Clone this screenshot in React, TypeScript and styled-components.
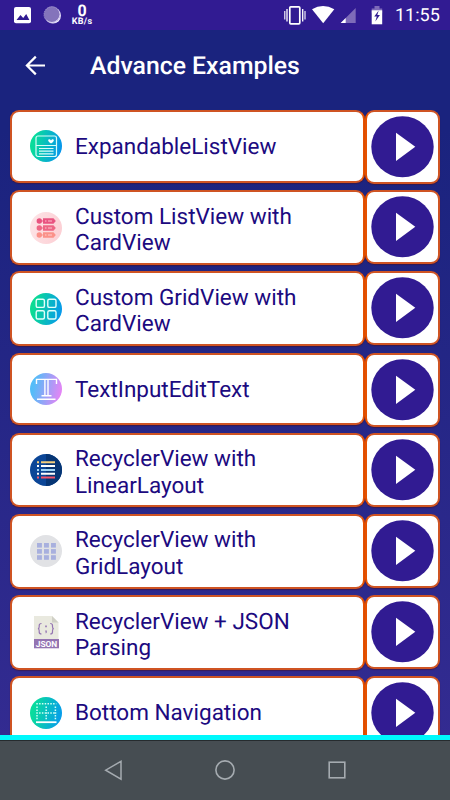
import React from 'react';
import styled, { createGlobalStyle } from 'styled-components';

const Global = createGlobalStyle`
  * { box-sizing: border-box; }
  body {
    margin: 0;
    overflow: hidden;
    font-family: Roboto, 'Liberation Sans', sans-serif;
    text-rendering: geometricPrecision;
  }
`;

const Screen = styled.div`
  width: 450px;
  height: 800px;
  display: flex;
  flex-direction: column;
  overflow: hidden;
  background: linear-gradient(#1a237e 0, #1a237e 130px, #332b91 740px);
`;

const StatusBar = styled.header`
  flex: none;
  height: 30px;
  display: flex;
  align-items: center;
  justify-content: space-between;
  background: #311b92;
  color: #fff;
`;

const StatusSide = styled.div`
  display: flex;
  align-items: center;
  height: 30px;
`;

const Speed = styled.div`
  width: 24px;
  display: flex;
  flex-direction: column;
  align-items: center;
  font-weight: 700;
`;

const SpeedValue = styled.span`
  font-size: 16px;
  line-height: 13px;
  font-weight: 700;
`;

const SpeedUnit = styled.span`
  font-size: 9px;
  line-height: 10px;
  letter-spacing: 0.3px;
`;

const Clock = styled.time`
  width: 55px;
  font-size: 18px;
  line-height: 30px;
  padding-top: 1px;
`;

const AppBar = styled.div`
  flex: none;
  height: 71px;
  display: flex;
  align-items: center;
  padding: 0 0 0 23px;
`;

const BackButton = styled.button`
  width: 67px;
  height: 24px;
  padding: 0;
  border: 0;
  background: none;
  display: flex;
`;

const Title = styled.h1`
  margin: 0;
  padding-top: 3px;
  color: #fff;
  font-size: 24.8px;
  line-height: 30px;
  font-weight: 500;
  white-space: nowrap;
`;

const List = styled.main`
  flex: none;
  height: 634px;
  padding: 9px 10px 0;
  overflow: hidden;
`;

const Row = styled.div<{ $double: boolean }>`
  display: flex;
  align-items: flex-start;
  height: ${(p) => (p.$double ? 81.15 : 80.3)}px;
`;

const Card = styled.div`
  background: #fff;
  border: 2px solid #cf5423;
  border-radius: 9px;
  box-shadow: 0 1px 1px rgba(70, 15, 40, 0.55);
`;

const LabelCard = styled(Card)<{ $double: boolean }>`
  width: 355px;
  height: ${(p) => (p.$double ? 74.5 : 72.5)}px;
  padding-left: 18px;
  display: flex;
  align-items: center;
  border-right-color: #e65100;
`;

const PlayCard = styled(Card)`
  width: 75px;
  height: 74px;
  display: flex;
  align-items: center;
  justify-content: center;
  border-left-color: #e65100;
`;

const IconBox = styled.span`
  width: 32px;
  height: 32px;
  margin-right: 13px;
  display: flex;
  flex: none;
`;

const Label = styled.span<{ $double: boolean }>`
  padding-top: ${(p) => (p.$double ? 5 : 2)}px;
  color: #1c0a80;
  font-size: 22.5px;
  line-height: 26.3px;
  white-space: pre-line;
`;

const Accent = styled.div`
  flex: none;
  height: 5px;
  background: #00f8fc;
`;

const NavBar = styled.footer`
  flex: none;
  height: 60px;
  display: flex;
  justify-content: center;
  gap: 88px;
  align-items: center;
  background: #464d52;
  border-top: 1px solid #262b2e;
  padding-bottom: 1px;
`;

const Disc = ({ id, from, to }: { id: string; from: string; to: string }) => (
  <>
    <defs>
      <linearGradient id={id} x1="0" x2="1" y1=".4" y2=".6">
        <stop offset=".1" stopColor={from} />
        <stop offset="1" stopColor={to} />
      </linearGradient>
    </defs>
    <circle cx="16" cy="16" r="16" fill={`url(#${id})`} />
  </>
);

const Svg = ({ children }: { children: React.ReactNode }) => (
  <svg width="32" height="32" viewBox="0 0 32 32" fill="none" overflow="visible">{children}</svg>
);

const ExpandIcon = () => (
  <Svg>
    <Disc id="expand" from="#08dc9b" to="#0794ee" />
    <g stroke="#d8fcf8" strokeWidth="1.2">
      <rect x="6" y="6" width="20.5" height="20.5" rx="2" />
      <path d="M6 15.5h20.5M9 18.5h14.5M9 21.2h14.5M9 23.9h14.5" />
    </g>
    <path d="M18 10q1.5-1.5 3 .4 1.5-1.9 3-.4-.4 2-3 3.6-2.6-1.6-3-3.6" fill="#fff" />
  </Svg>
);

const PinkListIcon = () => (
  <Svg>
    <Disc id="pink" from="#fde1e4" to="#fccfd4" />
    {['#e95380', '#ee6685', '#fb9189'].map((c, i) => (
      <g key={c} transform={`translate(0 ${i * 7})`}>
        <circle cx="9.3" cy="9" r="2.7" fill={c} />
        <path d="M13 6.3h10.5l2.3 2.7-2.3 2.7H13z" fill={c} />
        <path d="M11.5 9H13" stroke={c} />
        <path d="M15 9h1.5M18 9h4" stroke="#ffdce1" strokeWidth=".8" />
      </g>
    ))}
  </Svg>
);

const GridIcon = () => (
  <Svg>
    <Disc id="grid" from="#0bdc93" to="#0798ed" />
    <g stroke="#e3fffa" strokeWidth="1.4">
      <rect x="6.2" y="6.2" width="8.2" height="8.2" rx="1.5" />
      <rect x="17.8" y="6.2" width="8.2" height="8.2" rx="1.5" />
      <rect x="6.2" y="17.8" width="8.2" height="8.2" rx="1.5" />
      <rect x="17.8" y="17.8" width="8.2" height="8.2" rx="1.5" />
    </g>
  </Svg>
);

const TypeIcon = () => (
  <Svg>
    <Disc id="type" from="#53bdf8" to="#e883f5" />
    <path d="M6.5 11V6.4h20V11M14.9 7v16M18 7v16M11.5 22.8h10M7 26.2h18.5" stroke="#fff" strokeWidth="1.4" />
  </Svg>
);

const LinearIcon = () => (
  <Svg>
    <circle cx="16" cy="16" r="16" fill="#0b4697" />
    <path d="M16 0a16 16 0 0 1 0 32z" fill="#063574" />
    {['#f4cd7b', '#fff', '#9fd4f5', '#fff', '#f3536a'].map((c, i) => (
      <path key={i} d={`M7 ${8.3 + i * 3.8}h2M11 ${8.3 + i * 3.8}h14`} stroke={c} strokeWidth="2" />
    ))}
  </Svg>
);

const NineIcon = () => (
  <Svg>
    <circle cx="16" cy="16" r="16" fill="#e1e2e5" />
    {[0, 1, 2].map((r) =>
      [0, 1, 2].map((c) => (
        <rect key={`${r}${c}`} x={7 + c * 7} y={8 + r * 6.1} width="4.9" height="4.6" fill="#a8b0de" />
      ))
    )}
  </Svg>
);

const JsonIcon = () => (
  <Svg>
    <path d="M4 0h18l6.5 6.5V24H4z" fill="#e9e9df" />
    <path d="M22 0l6.5 6.5H22z" fill="#d0d0c6" />
    <path d="M4 23h25v9.3H4z" fill="#9474b2" />
    <path
      d="M11.5 7.5q-2.3 0-2.3 2v1.2q0 2-1.3 2 1.3 0 1.3 2V16q0 2 2.3 2M20.2 7.5q2.3 0 2.3 2v1.2q0 2 1.3 2-1.3 0-1.3 2V16q0 2-2.3 2"
      stroke="#9474b2"
      strokeWidth="1.2"
    />
    <path d="M15.2 9.5h1.6v1.7h-1.6zM15.2 14.5h1.6v2l-1 1z" fill="#9474b2" />
    <text x="16.5" y="30.6" fill="#fff" fontSize="8.4" fontWeight="700" textAnchor="middle" fontFamily="Roboto, sans-serif">JSON</text>
  </Svg>
);

const DottedIcon = () => (
  <Svg>
    <Disc id="dotted" from="#09dc9d" to="#079bed" />
    <path d="M6.3 6.8h20M6.3 16h20M7 9.6V23M16.2 9.6V23M25.4 9.6V23" stroke="#d0fff5" strokeWidth="1.5" strokeDasharray="1.5 1.3" />
    <path d="M6 25.2h20.5" stroke="#fff" strokeWidth="1.8" />
  </Svg>
);

const items = [
  { label: 'ExpandableListView', Icon: ExpandIcon },
  { label: 'Custom ListView with\nCardView', Icon: PinkListIcon },
  { label: 'Custom GridView with\nCardView', Icon: GridIcon },
  { label: 'TextInputEditText', Icon: TypeIcon },
  { label: 'RecyclerView with\nLinearLayout', Icon: LinearIcon },
  { label: 'RecyclerView with\nGridLayout', Icon: NineIcon },
  { label: 'RecyclerView + JSON\nParsing', Icon: JsonIcon },
  { label: 'Bottom Navigation', Icon: DottedIcon },
];

export default function App() {
  return (
    <>
      <Global />
      <Screen>
        <StatusBar>
          <StatusSide>
            <svg width="70" height="30" viewBox="0 0 70 30">
              <rect x="14" y="7" width="17" height="16.3" rx="2" fill="#fff" />
              <path d="M16.5 20l4-5 2.7 3 3-4 3.2 6z" fill="#311b92" />
              <circle cx="53" cy="15.5" r="8" fill="#eee9ff" />
              <circle cx="51.8" cy="14.3" r="7.8" fill="#8474bb" />
              <circle cx="52" cy="14.7" r="8" fill="none" stroke="#b2a6d9" strokeDasharray="1 1" />
            </svg>
            <Speed>
              <SpeedValue>0</SpeedValue>
              <SpeedUnit>KB/s</SpeedUnit>
            </Speed>
          </StatusSide>
          <StatusSide>
            <svg width="112" height="30" viewBox="283 0 112 30">
              <rect x="289.8" y="6.8" width="10" height="17" rx="1" fill="none" stroke="#fff" strokeWidth="1.7" />
              <path d="M287 9v12.5M302.7 9v12.5" stroke="#fff" strokeWidth="1.3" />
              <path d="M284.8 11v8.5M305 11v8.5" stroke="#fff" strokeWidth="1.1" />
              <path d="M312 9.3Q323 2.7 334.3 9.3L323.2 23.3z" fill="#fff" />
              <path d="M355.7 8v15h-15z" fill="#7e6bb9" />
              <path d="M345.7 18v5h-5z" fill="#fff" />
              <path d="M374.5 6h5v2.5h2.7v4.7h-10.5V8.5h2.8z" fill="#7e6bb9" />
              <path d="M371.7 10.3h10.5v14h-10.5z" fill="#fff" />
              <path d="M378.7 10.5l-4.5 6h2.6l-1.5 5 4.6-6.6h-2.6z" fill="#311b92" />
            </svg>
            <Clock>11:55</Clock>
          </StatusSide>
        </StatusBar>
        <AppBar>
          <BackButton aria-label="Back">
            <svg width="24" height="24" viewBox="0 0 24 24" fill="none">
              <path d="M22 11.5H4M12.8 2.6L3.9 11.5l8.9 8.9" stroke="#fff" strokeWidth="2.2" />
            </svg>
          </BackButton>
          <Title>Advance Examples</Title>
        </AppBar>
        <List>
          {items.map(({ label, Icon }) => {
            const double = label.includes('\n');
            return (
              <Row key={label} $double={double}>
                <LabelCard $double={double}>
                  <IconBox><Icon /></IconBox>
                  <Label $double={double}>{label}</Label>
                </LabelCard>
                <PlayCard>
                  <svg width="63" height="62" viewBox="0 0 63 62">
                    <ellipse cx="31.5" cy="30.8" rx="31.2" ry="30.5" fill="#311b92" />
                    <path d="M25 16.7l19.3 14L25 44.9z" fill="#fff" />
                  </svg>
                </PlayCard>
              </Row>
            );
          })}
        </List>
        <Accent />
        <NavBar>
          <svg width="24" height="24" viewBox="0 0 24 24" fill="none" stroke="#a5abb0" strokeWidth="1.5">
            <path d="M20 3.3v17.8L4.7 12.2z" />
          </svg>
          <svg width="24" height="24" viewBox="0 0 24 24" fill="none" stroke="#a5abb0" strokeWidth="1.6">
            <circle cx="12" cy="12" r="9.1" />
          </svg>
          <svg width="24" height="24" viewBox="0 0 24 24" fill="none" stroke="#a5abb0" strokeWidth="1.6">
            <rect x="4.2" y="4.2" width="15.6" height="15.6" />
          </svg>
        </NavBar>
      </Screen>
    </>
  );
}
